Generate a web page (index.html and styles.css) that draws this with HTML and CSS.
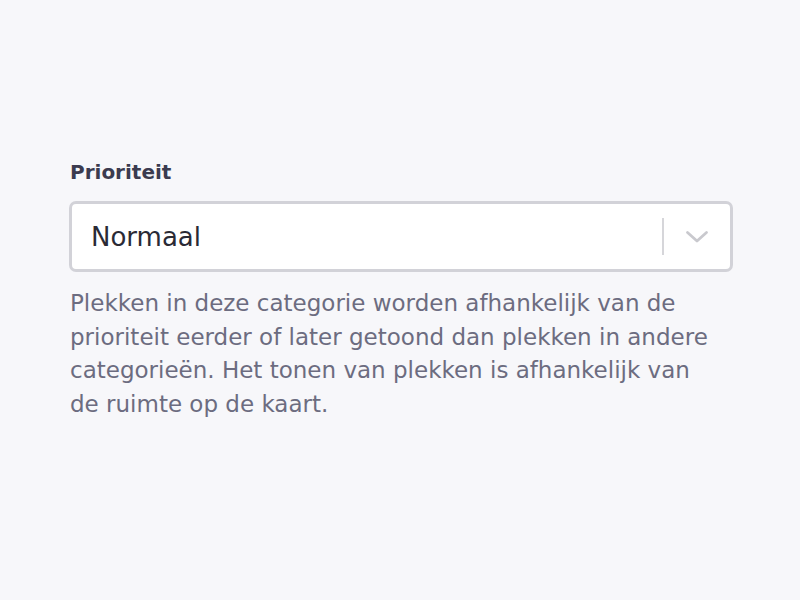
FILE: index.html
```html
<!DOCTYPE html>
<html lang="nl">
<head>
<meta charset="utf-8">
<link rel="stylesheet" href="styles.css">
</head>
<body>
<div class="page">
  <div class="field">
    <label class="label">Prioriteit</label>
    <div class="select">
      <span class="value">Normaal</span>
      <span class="indicators">
        <span class="sep"></span>
        <svg class="chev" width="24" height="14" viewBox="0 0 24 14"><path d="M2.5 2.5 L12 11 L21.5 2.5" fill="none" stroke="#c9c9ce" stroke-width="2.8" stroke-linecap="round" stroke-linejoin="round"/></svg>
      </span>
    </div>
    <p class="help">Plekken in deze categorie worden afhankelijk van de prioriteit eerder of later getoond dan plekken in andere categorieën. Het tonen van plekken is afhankelijk van de ruimte op de kaart.</p>
  </div>
</div>
</body>
</html>
```
FILE: styles.css
```css
html, body {
  margin: 0;
  padding: 0;
  background: #f7f7fa;
  font-family: "DejaVu Sans", "Noto Sans", sans-serif;
}
.page {
  padding: 157px 67px 0 69px;
}
.field {
  width: 664px;
}
.label {
  display: block;
  font-size: 20px;
  font-weight: 700;
  color: #3b3b4f;
  line-height: 30px;
  margin-left: 1px;
  margin-bottom: 14px;
}
.select {
  box-sizing: border-box;
  height: 71px;
  border: 3px solid #d2d2d8;
  border-radius: 7px;
  background: #ffffff;
  display: flex;
  align-items: center;
  padding-left: 19px;
}
.value {
  flex: 1;
  font-size: 26px;
  color: #2a2a35;
}
.indicators {
  display: flex;
  align-items: center;
  height: 100%;
}
.sep {
  width: 2px;
  height: 37px;
  background: #d6d6da;
  margin-right: 21px;
}
.chev {
  margin-right: 21px;
}
.help {
  max-width: 648px;
  margin: 15px 0 0 1px;
  font-size: 23px;
  line-height: 33.6px;
  color: #6c6c80;
}
```
